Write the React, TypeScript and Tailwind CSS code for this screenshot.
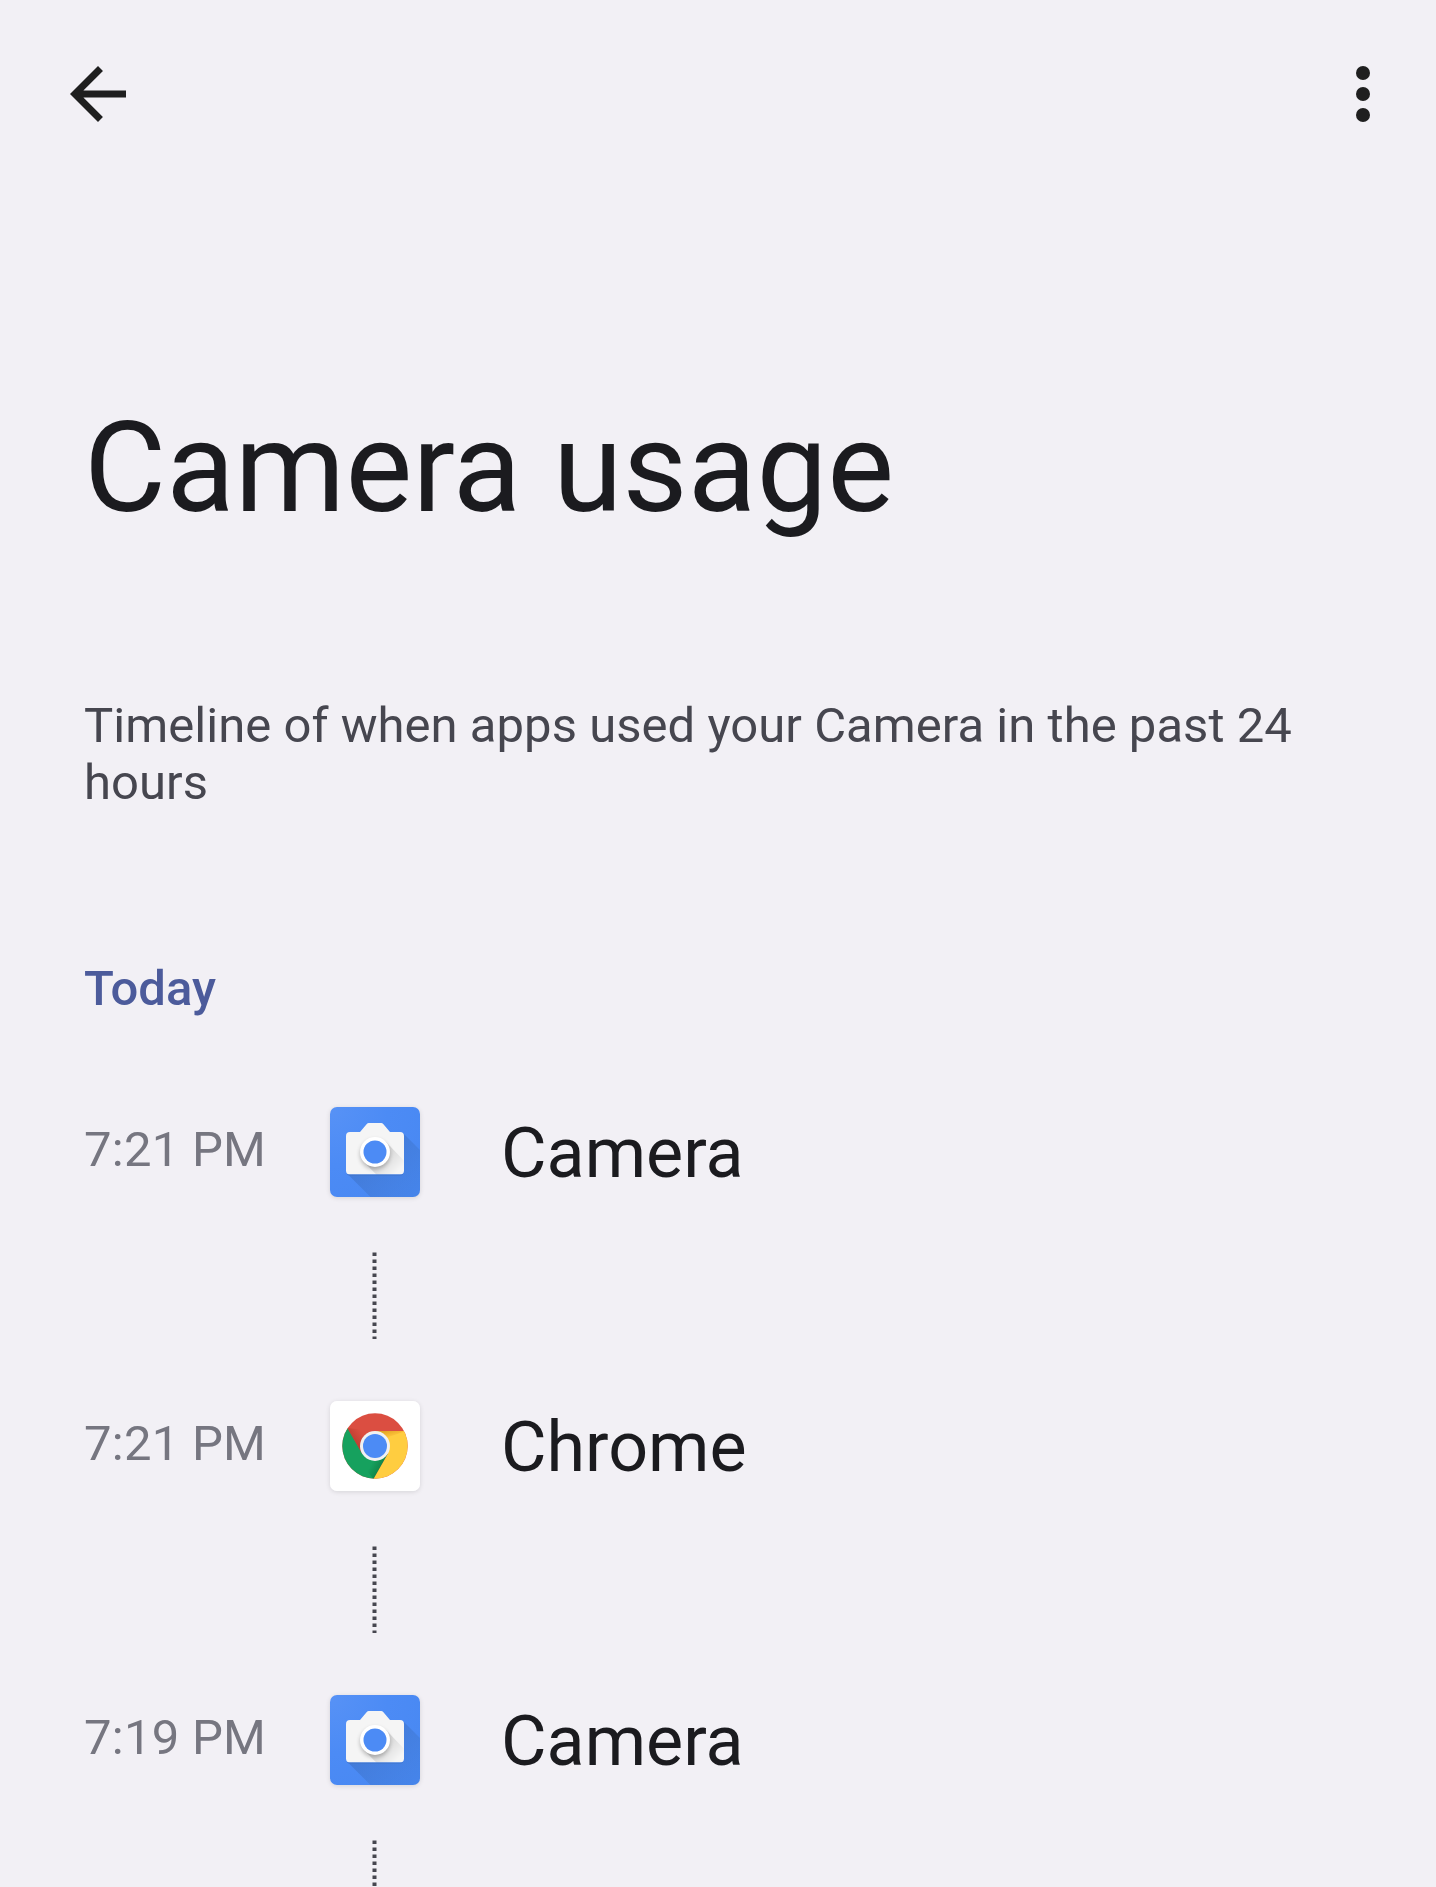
import React from "react";

type AppKind = "camera" | "chrome";

const entries: { time: string; name: string; kind: AppKind }[] = [
  { time: "7:21 PM", name: "Camera", kind: "camera" },
  { time: "7:21 PM", name: "Chrome", kind: "chrome" },
  { time: "7:19 PM", name: "Camera", kind: "camera" },
];

function CameraIcon() {
  return (
    <svg viewBox="0 0 90 90" className="block size-[90px]">
      <defs>
        <radialGradient id="cam-bg" cx="0" cy="0" r="1.3">
          <stop offset="0" stopColor="#5792f6" />
          <stop offset="0.5" stopColor="#4c8bf5" />
          <stop offset="1" stopColor="#4888f2" />
        </radialGradient>
        <linearGradient id="cam-long" gradientUnits="userSpaceOnUse" x1="44" y1="44" x2="86" y2="86">
          <stop offset="0" stopColor="#3c6fc2" stopOpacity="0.55" />
          <stop offset="1" stopColor="#3f78d0" stopOpacity="0.25" />
        </linearGradient>
        <linearGradient id="lens-long" gradientUnits="userSpaceOnUse" x1="50" y1="50" x2="66" y2="66">
          <stop offset="0" stopColor="#000" stopOpacity="0.13" />
          <stop offset="1" stopColor="#000" stopOpacity="0" />
        </linearGradient>
        <filter id="lens-blur" x="-30%" y="-30%" width="160%" height="160%">
          <feGaussianBlur stdDeviation="2" />
        </filter>
        <clipPath id="cam-body">
          <path d="M20 25H30L37 16.700Q37.700 16 38.700 16H51.300Q52.300 16 53 16.700L60 25H70Q74 25 74 29V63.500Q74 67.500 70 67.500H20Q16 67.500 16 63.500V29Q16 25 20 25Z" />
        </clipPath>
      </defs>
      <rect width="90" height="90" rx="7" fill="url(#cam-bg)" />
      <path d="M17 66.500L40.500 90H83Q90 90 90 83V43L73.200 26.200V67H17Z" fill="url(#cam-long)" />
      <path d="M17 67.200Q18 68.300 20 68.300H70Q72 68.300 73 67.200" stroke="#3f72c4" strokeOpacity="0.5" fill="none" />
      <g clipPath="url(#cam-body)">
        <rect x="16" y="16" width="58" height="51.500" fill="#f5f5f5" />
        <path d="M34.400 55.600L46.800 68H74V53.800L55.600 34.400Z" fill="url(#lens-long)" />
        <circle cx="45" cy="47.500" r="15" fill="#000" opacity="0.25" filter="url(#lens-blur)" />
      </g>
      <circle cx="45" cy="45" r="15" fill="#fff" />
      <circle cx="45" cy="45" r="11.500" fill="#4c8bf5" />
    </svg>
  );
}

function ChromeIcon() {
  return (
    <svg viewBox="0 0 90 90" className="block size-[90px]">
      <defs>
        <clipPath id="chrome-disc">
          <circle cx="45" cy="45" r="32.700" />
        </clipPath>
        <linearGradient id="red-shade" gradientUnits="userSpaceOnUse" x1="22" y1="42" x2="34" y2="33">
          <stop offset="0" stopColor="#8c2318" stopOpacity="0.45" />
          <stop offset="1" stopColor="#a52714" stopOpacity="0" />
        </linearGradient>
        <linearGradient id="green-shade" gradientUnits="userSpaceOnUse" x1="54" y1="69" x2="42" y2="62">
          <stop offset="0" stopColor="#055524" stopOpacity="0.5" />
          <stop offset="1" stopColor="#055524" stopOpacity="0" />
        </linearGradient>
        <linearGradient id="yellow-shade" gradientUnits="userSpaceOnUse" x1="56" y1="30" x2="58" y2="38">
          <stop offset="0" stopColor="#b06f00" stopOpacity="0.4" />
          <stop offset="1" stopColor="#ea6100" stopOpacity="0" />
        </linearGradient>
      </defs>
      <rect width="90" height="90" rx="7" fill="#fff" />
      <g clipPath="url(#chrome-disc)">
        <rect width="90" height="90" fill="#db4e41" />
        <path d="M17.300 27L32 52.500L45 60L58 52.500L43.500 78L40 85H0V20Z" fill="#16a15e" />
        <path d="M45 30H90V90H36.600L58 52.500Z" fill="#ffcd40" />
        <path d="M17.300 27L32 52.500L45 30Z" fill="url(#red-shade)" />
        <path d="M58 52.500L43.500 78L34 66L45 58Z" fill="url(#green-shade)" />
        <path d="M45 30H76L58.500 36L58 45Z" fill="url(#yellow-shade)" />
      </g>
      <circle cx="45" cy="45" r="15" fill="#f1f1f1" />
      <circle cx="45" cy="45" r="12" fill="#4c8bf5" />
    </svg>
  );
}

function DottedConnector() {
  return (
    <svg viewBox="0 0 6 87" className="mt-[55px] h-[87px] w-[6px]">
      <path d="M2.500 0.500V87" stroke="#46464f" strokeWidth="4" strokeDasharray="3.500 3.500" />
    </svg>
  );
}

function TimelineRow({ time, name, kind }: { time: string; name: string; kind: AppKind }) {
  return (
    <li className="flex h-[294px] shrink-0 items-start pl-[84px]">
      <span className="mt-[14px] w-[246px] text-[49px] leading-[58px] tracking-[0.26px] text-[#767680]">{time}</span>
      <div className="flex w-[90px] flex-col items-center">
        <div className="rounded-[7px] shadow-[0_1px_5px_rgba(0,0,0,0.12)]">
          {kind === "camera" ? <CameraIcon /> : <ChromeIcon />}
        </div>
        <DottedConnector />
      </div>
      <span className="mt-[5px] ml-[81px] text-[70px] leading-[82px] text-[#1b1b1f]">{name}</span>
    </li>
  );
}

export default function App() {
  return (
    <main className="flex h-[1887px] w-[1436px] flex-col overflow-hidden bg-[#f2f0f5] font-['Roboto',sans-serif]">
      <header className="flex shrink-0 justify-between pt-[52px] pr-[31px] pl-[56px]">
        <button aria-label="Back">
          <svg viewBox="0 0 24 24" className="block size-[84px]" fill="#1f1f1f">
            <path d="M20 11H7.830l5.590-5.590L12 4l-8 8 8 8 1.410-1.410L7.830 13H20v-2z" />
          </svg>
        </button>
        <button aria-label="More options">
          <svg viewBox="0 0 24 24" className="block size-[84px]" fill="#1f1f1f">
            <circle cx="12" cy="6" r="2" />
            <circle cx="12" cy="12" r="2" />
            <circle cx="12" cy="18" r="2" />
          </svg>
        </button>
      </header>
      <h1 className="mt-[258px] ml-[84px] shrink-0 text-[126px] leading-[148px] tracking-[0.15px] text-[#1b1b1f]">
        Camera usage
      </h1>
      <p className="mt-[155px] ml-[84px] w-[1268px] shrink-0 text-[49px] leading-[57px] tracking-[0.035px] text-[#46464f]">
        Timeline of when apps used your Camera in the past 24 hours
      </p>
      <h2 className="mt-[149px] ml-[84px] shrink-0 text-[49px] leading-[58px] font-medium text-[#4c5b9b]">Today</h2>
      <ul className="mt-[89px] flex flex-col">
        {entries.map((entry, i) => (
          <TimelineRow key={i} {...entry} />
        ))}
      </ul>
    </main>
  );
}
